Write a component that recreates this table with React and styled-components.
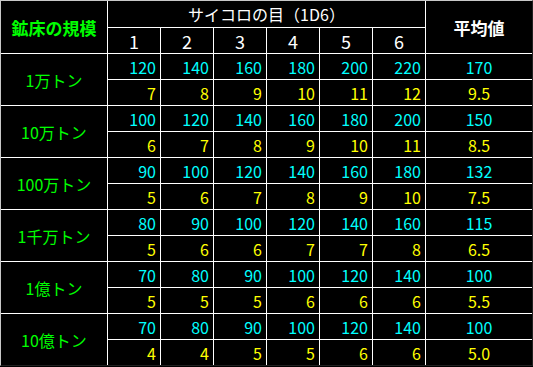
import React from "react";
import styled, { createGlobalStyle } from "styled-components";

const Global = createGlobalStyle`
  html, body { margin: 0; padding: 0; background: #000; }
  body { font-family: "Noto Sans CJK JP", "DejaVu Sans", sans-serif; }
`;

const Table = styled.div`
  display: grid;
  grid-template-columns: 106px repeat(6, 52px) 106px;
  grid-template-rows: 26px repeat(13, 25px);
  gap: 1px;
  width: max-content;
  background: #ffffff;
  border-top: 1px solid #c8c8c8;
  border-left: 1px solid #c8c8c8;
  border-right: 1px solid #202020;
  border-bottom: 1px solid #202020;
`;

const Cell = styled.div`
  background: #000;
  display: flex;
  align-items: center;
  justify-content: ${(p) => (p.$align === "right" ? "flex-end" : "center")};
  padding-right: ${(p) => (p.$align === "right" ? "4px" : "0")};
  grid-row: ${(p) => (p.$rows ? `span ${p.$rows}` : "auto")};
  grid-column: ${(p) => (p.$cols ? `span ${p.$cols}` : "auto")};
  color: ${(p) => p.$color || "#fff"};
  font-size: ${(p) => p.$size || 16}px;
  font-weight: ${(p) => (p.$bold ? 700 : 400)};
  line-height: 1;
  white-space: nowrap;
`;

const CYAN = "#00ffff";
const YELLOW = "#ffff00";
const GREEN = "#00ff00";

const groups = [
  { label: "1万トン", top: [120, 140, 160, 180, 200, 220], topAvg: "170", bottom: [7, 8, 9, 10, 11, 12], bottomAvg: "9.5" },
  { label: "10万トン", top: [100, 120, 140, 160, 180, 200], topAvg: "150", bottom: [6, 7, 8, 9, 10, 11], bottomAvg: "8.5" },
  { label: "100万トン", top: [90, 100, 120, 140, 160, 180], topAvg: "132", bottom: [5, 6, 7, 8, 9, 10], bottomAvg: "7.5" },
  { label: "1千万トン", top: [80, 90, 100, 120, 140, 160], topAvg: "115", bottom: [5, 6, 6, 7, 7, 8], bottomAvg: "6.5" },
  { label: "1億トン", top: [70, 80, 90, 100, 120, 140], topAvg: "100", bottom: [5, 5, 5, 6, 6, 6], bottomAvg: "5.5" },
  { label: "10億トン", top: [70, 80, 90, 100, 120, 140], topAvg: "100", bottom: [4, 4, 5, 5, 6, 6], bottomAvg: "5.0" },
];

export default function App() {
  return (
    <>
      <Global />
      <Table>
        <Cell $rows={2} $color={GREEN} $size={17} $bold>鉱床の規模</Cell>
        <Cell $cols={6} $size={16}>サイコロの目（1D6）</Cell>
        <Cell $rows={2} $size={17} $bold>平均値</Cell>
        {[1, 2, 3, 4, 5, 6].map((n) => (
          <Cell key={n} $size={18}>{n}</Cell>
        ))}
        {groups.map((g) => (
          <React.Fragment key={g.label}>
            <Cell $rows={2} $color={GREEN} $size={16}>{g.label}</Cell>
            {g.top.map((v, i) => (
              <Cell key={"t" + i} $align="right" $color={CYAN}>{v}</Cell>
            ))}
            <Cell $color={CYAN}>{g.topAvg}</Cell>
            {g.bottom.map((v, i) => (
              <Cell key={"b" + i} $align="right" $color={YELLOW}>{v}</Cell>
            ))}
            <Cell $color={YELLOW}>{g.bottomAvg}</Cell>
          </React.Fragment>
        ))}
      </Table>
    </>
  );
}
